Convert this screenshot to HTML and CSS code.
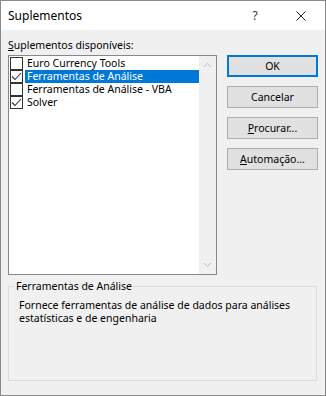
FILE: index.html
```html
<!DOCTYPE html>
<html>
<head>
    <title>Suplementos</title>
    <link rel="stylesheet" href="styles.css">
</head>
<body>
    <div class="window">
        <div class="titlebar">
            <span class="title">Suplementos</span>
            <span class="help">?</span>
            <span class="close">
                <svg width="10" height="10" viewBox="0 0 10 10"><path d="M0.5 0.5 L9.5 9.5 M9.5 0.5 L0.5 9.5" stroke="#222" stroke-width="1"/></svg>
            </span>
        </div>

        <div class="content">
            <div class="label"><u>S</u>uplementos disponíveis:</div>

            <div class="main">
                <div class="listbox">
                    <div class="items">
                        <div class="item">
                            <span class="check"></span>
                            <span class="text">Euro Currency Tools</span>
                        </div>
                        <div class="item selected">
                            <span class="check">
                                <svg width="11" height="11" viewBox="0 0 11 11"><path d="M1 5.5 L4 8.5 L10 2" fill="none" stroke="#333" stroke-width="1.1"/></svg>
                            </span>
                            <span class="text">Ferramentas de Análise</span>
                        </div>
                        <div class="item">
                            <span class="check"></span>
                            <span class="text">Ferramentas de Análise - VBA</span>
                        </div>
                        <div class="item">
                            <span class="check">
                                <svg width="11" height="11" viewBox="0 0 11 11"><path d="M1 5.5 L4 8.5 L10 2" fill="none" stroke="#333" stroke-width="1.1"/></svg>
                            </span>
                            <span class="text">Solver</span>
                        </div>
                    </div>
                    <div class="scrollbar">
                        <svg width="9" height="6" viewBox="0 0 9 6"><path d="M1 5 L4.5 1.5 L8 5" fill="none" stroke="#bcbcbc" stroke-width="1"/></svg>
                        <svg width="9" height="6" viewBox="0 0 9 6"><path d="M1 1 L4.5 4.5 L8 1" fill="none" stroke="#bcbcbc" stroke-width="1"/></svg>
                    </div>
                </div>

                <div class="buttons">
                    <button class="btn default">OK</button>
                    <button class="btn">Cancelar</button>
                    <button class="btn"><u>P</u>rocurar...</button>
                    <button class="btn"><u>A</u>utomação...</button>
                </div>
            </div>

            <fieldset class="group">
                <legend>Ferramentas de Análise</legend>
                <p class="desc">Fornece ferramentas de análise de dados para análises estatísticas e de engenharia</p>
            </fieldset>
        </div>
    </div>
</body>
</html>
```

FILE: styles.css
```css
body {
    margin: 0;
    font-family: "Noto Sans", "Open Sans", sans-serif;
    font-size: 10.5px;
    color: #000;
}
.window {
    width: 326px;
    height: 396px;
    box-sizing: border-box;
    border: 1px solid #8a8a8a;
    background-color: #f0f0f0;
    display: flex;
    flex-direction: column;
}
.titlebar {
    height: 29px;
    background-color: #fff;
    display: flex;
    align-items: center;
    padding-left: 7px;
}
.title {
    font-size: 12px;
    flex: 1;
}
.help {
    font-size: 12px;
    color: #333;
    width: 44px;
    text-align: center;
}
.close {
    width: 48px;
    display: flex;
    justify-content: center;
    align-items: center;
}
.content {
    padding: 7px 7px 0 7px;
}
.label {
    height: 18px;
    line-height: 16px;
}
.main {
    display: flex;
    gap: 10px;
}
.listbox {
    width: 209px;
    height: 220px;
    box-sizing: border-box;
    border: 1px solid #828790;
    background-color: #fff;
    display: flex;
}
.items {
    flex: 1;
    padding-top: 1px;
}
.item {
    height: 13px;
    display: flex;
    align-items: center;
}
.check {
    width: 11px;
    height: 11px;
    border: 1px solid #333;
    background-color: #fff;
    margin-left: 1px;
    margin-right: 2px;
    display: flex;
}
.text {
    flex: 1;
    height: 13px;
    line-height: 13px;
    padding-left: 2px;
}
.selected .text {
    background-color: #0078d7;
    color: #fff;
}
.scrollbar {
    width: 17px;
    background-color: #f0f0f0;
    display: flex;
    flex-direction: column;
    justify-content: space-between;
    align-items: center;
    padding: 6px 0;
}
.buttons {
    display: flex;
    flex-direction: column;
    gap: 9px;
}
.btn {
    width: 91px;
    height: 22px;
    margin: 0;
    padding: 0;
    font-family: inherit;
    font-size: 10.5px;
    background-color: #e1e1e1;
    border: 1px solid #adadad;
    color: #000;
}
.default {
    border: 2px solid #0078d7;
}
.group {
    margin: 5px 1px 0 0;
    height: 101px;
    box-sizing: border-box;
    border: 1px solid #dcdcdc;
    padding: 6px 10px 0 10px;
}
.group legend {
    margin-left: -4px;
    padding: 0 1px;
    line-height: 13px;
}
.desc {
    margin: 0;
    line-height: 13px;
}
```
